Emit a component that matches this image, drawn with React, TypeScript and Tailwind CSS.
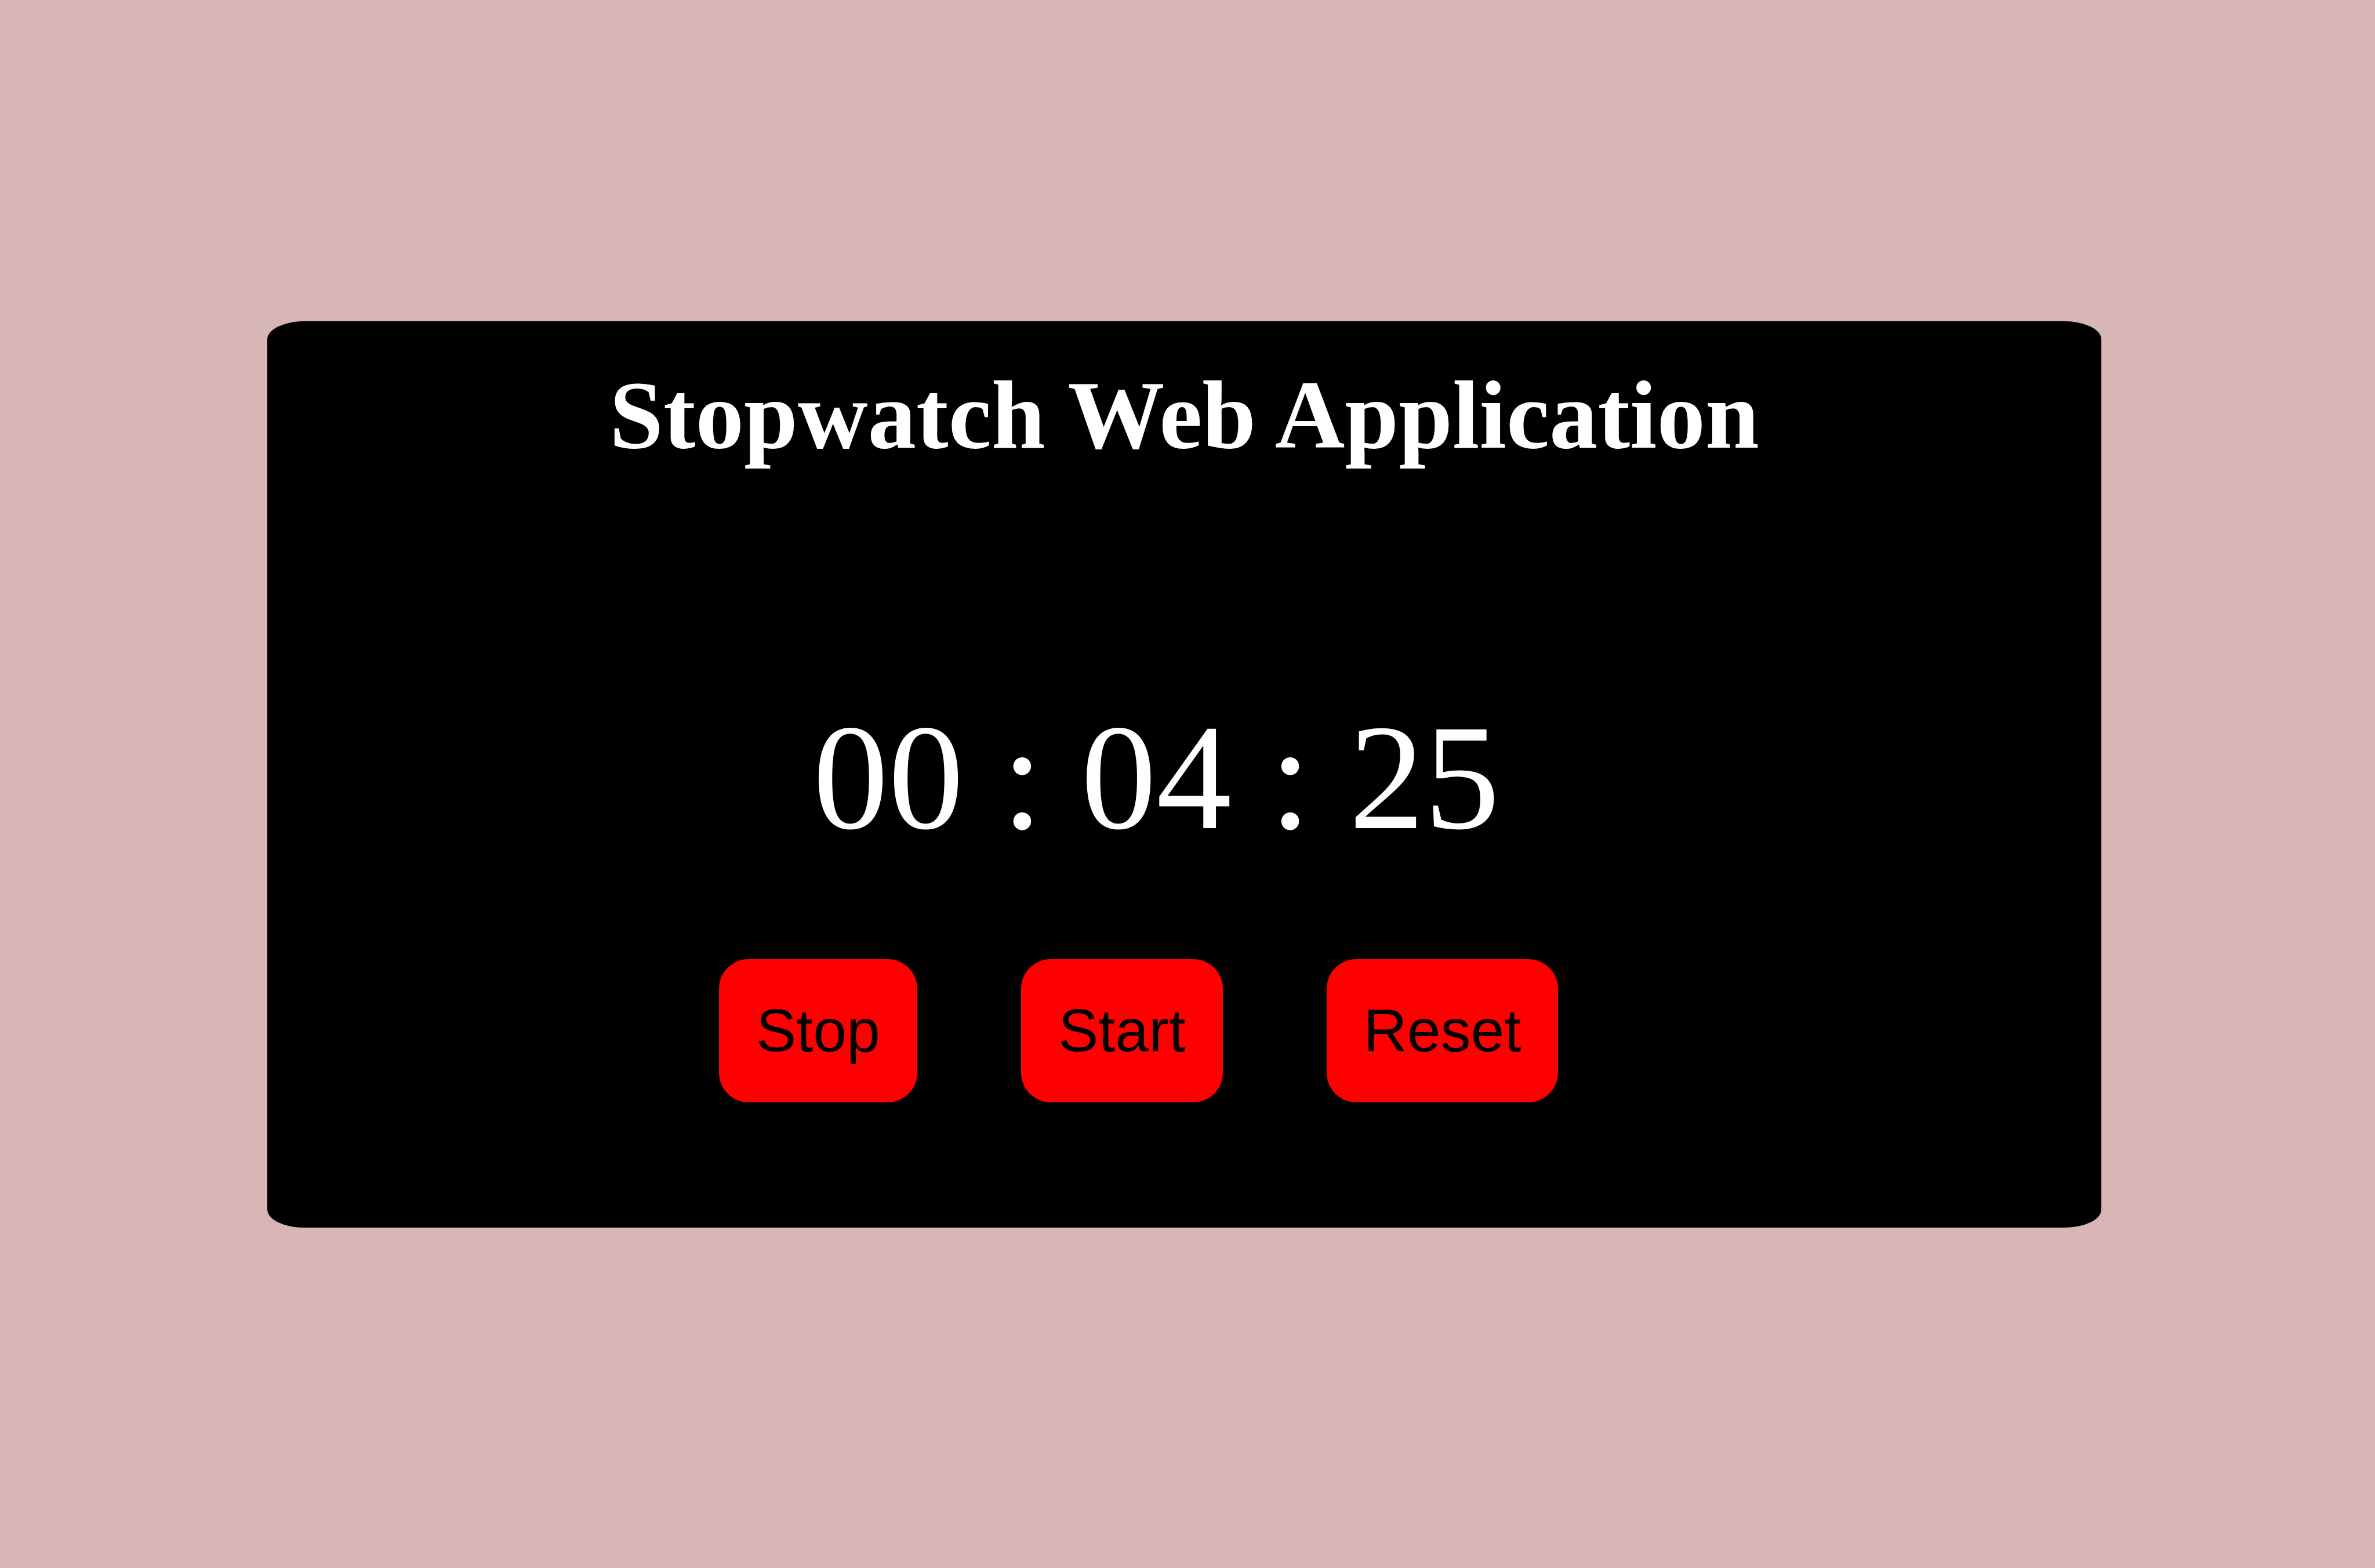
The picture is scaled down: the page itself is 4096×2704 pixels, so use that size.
import { useEffect, useState } from "react";

const pad = (n: number) => String(n).padStart(2, "0");

function ControlButton({ label, onClick }: { label: string; onClick: () => void }) {
  return (
    <button
      type="button"
      onClick={onClick}
      className="cursor-pointer rounded-[51px] bg-[#ff0000] px-16 py-16 font-['Liberation_Sans',Arial,sans-serif] text-[104px] leading-[119px] text-black"
    >
      {label}
    </button>
  );
}

export default function App() {
  const [ticks, setTicks] = useState(425);
  const [running, setRunning] = useState(false);

  useEffect(() => {
    if (!running) return;
    const id = setInterval(() => setTicks((t) => t + 1), 10);
    return () => clearInterval(id);
  }, [running]);

  const minutes = Math.floor(ticks / 6000);
  const seconds = Math.floor(ticks / 100) % 60;
  const hundredths = ticks % 100;

  return (
    <div className="min-h-screen bg-[#d8b6b5] pt-[554px] pr-[472px] pb-[587px] pl-[461px]">
      <main className="flex flex-col rounded-[2%] bg-black pt-[66px] pb-[216px] font-['Liberation_Serif','Times_New_Roman',serif] text-white">
        <h1 className="text-center text-[167px] leading-[192px] font-bold">Stopwatch Web Application</h1>
        <div role="timer" className="mt-[378px] pl-[941px] text-[260px] leading-[300px]">
          {`${pad(minutes)} : ${pad(seconds)} : ${pad(hundredths)}`}
        </div>
        <div className="mt-[164px] flex gap-[179px] pl-[779px]">
          <ControlButton label="Stop" onClick={() => setRunning(false)} />
          <ControlButton label="Start" onClick={() => setRunning(true)} />
          <ControlButton
            label="Reset"
            onClick={() => {
              setRunning(false);
              setTicks(0);
            }}
          />
        </div>
      </main>
    </div>
  );
}
